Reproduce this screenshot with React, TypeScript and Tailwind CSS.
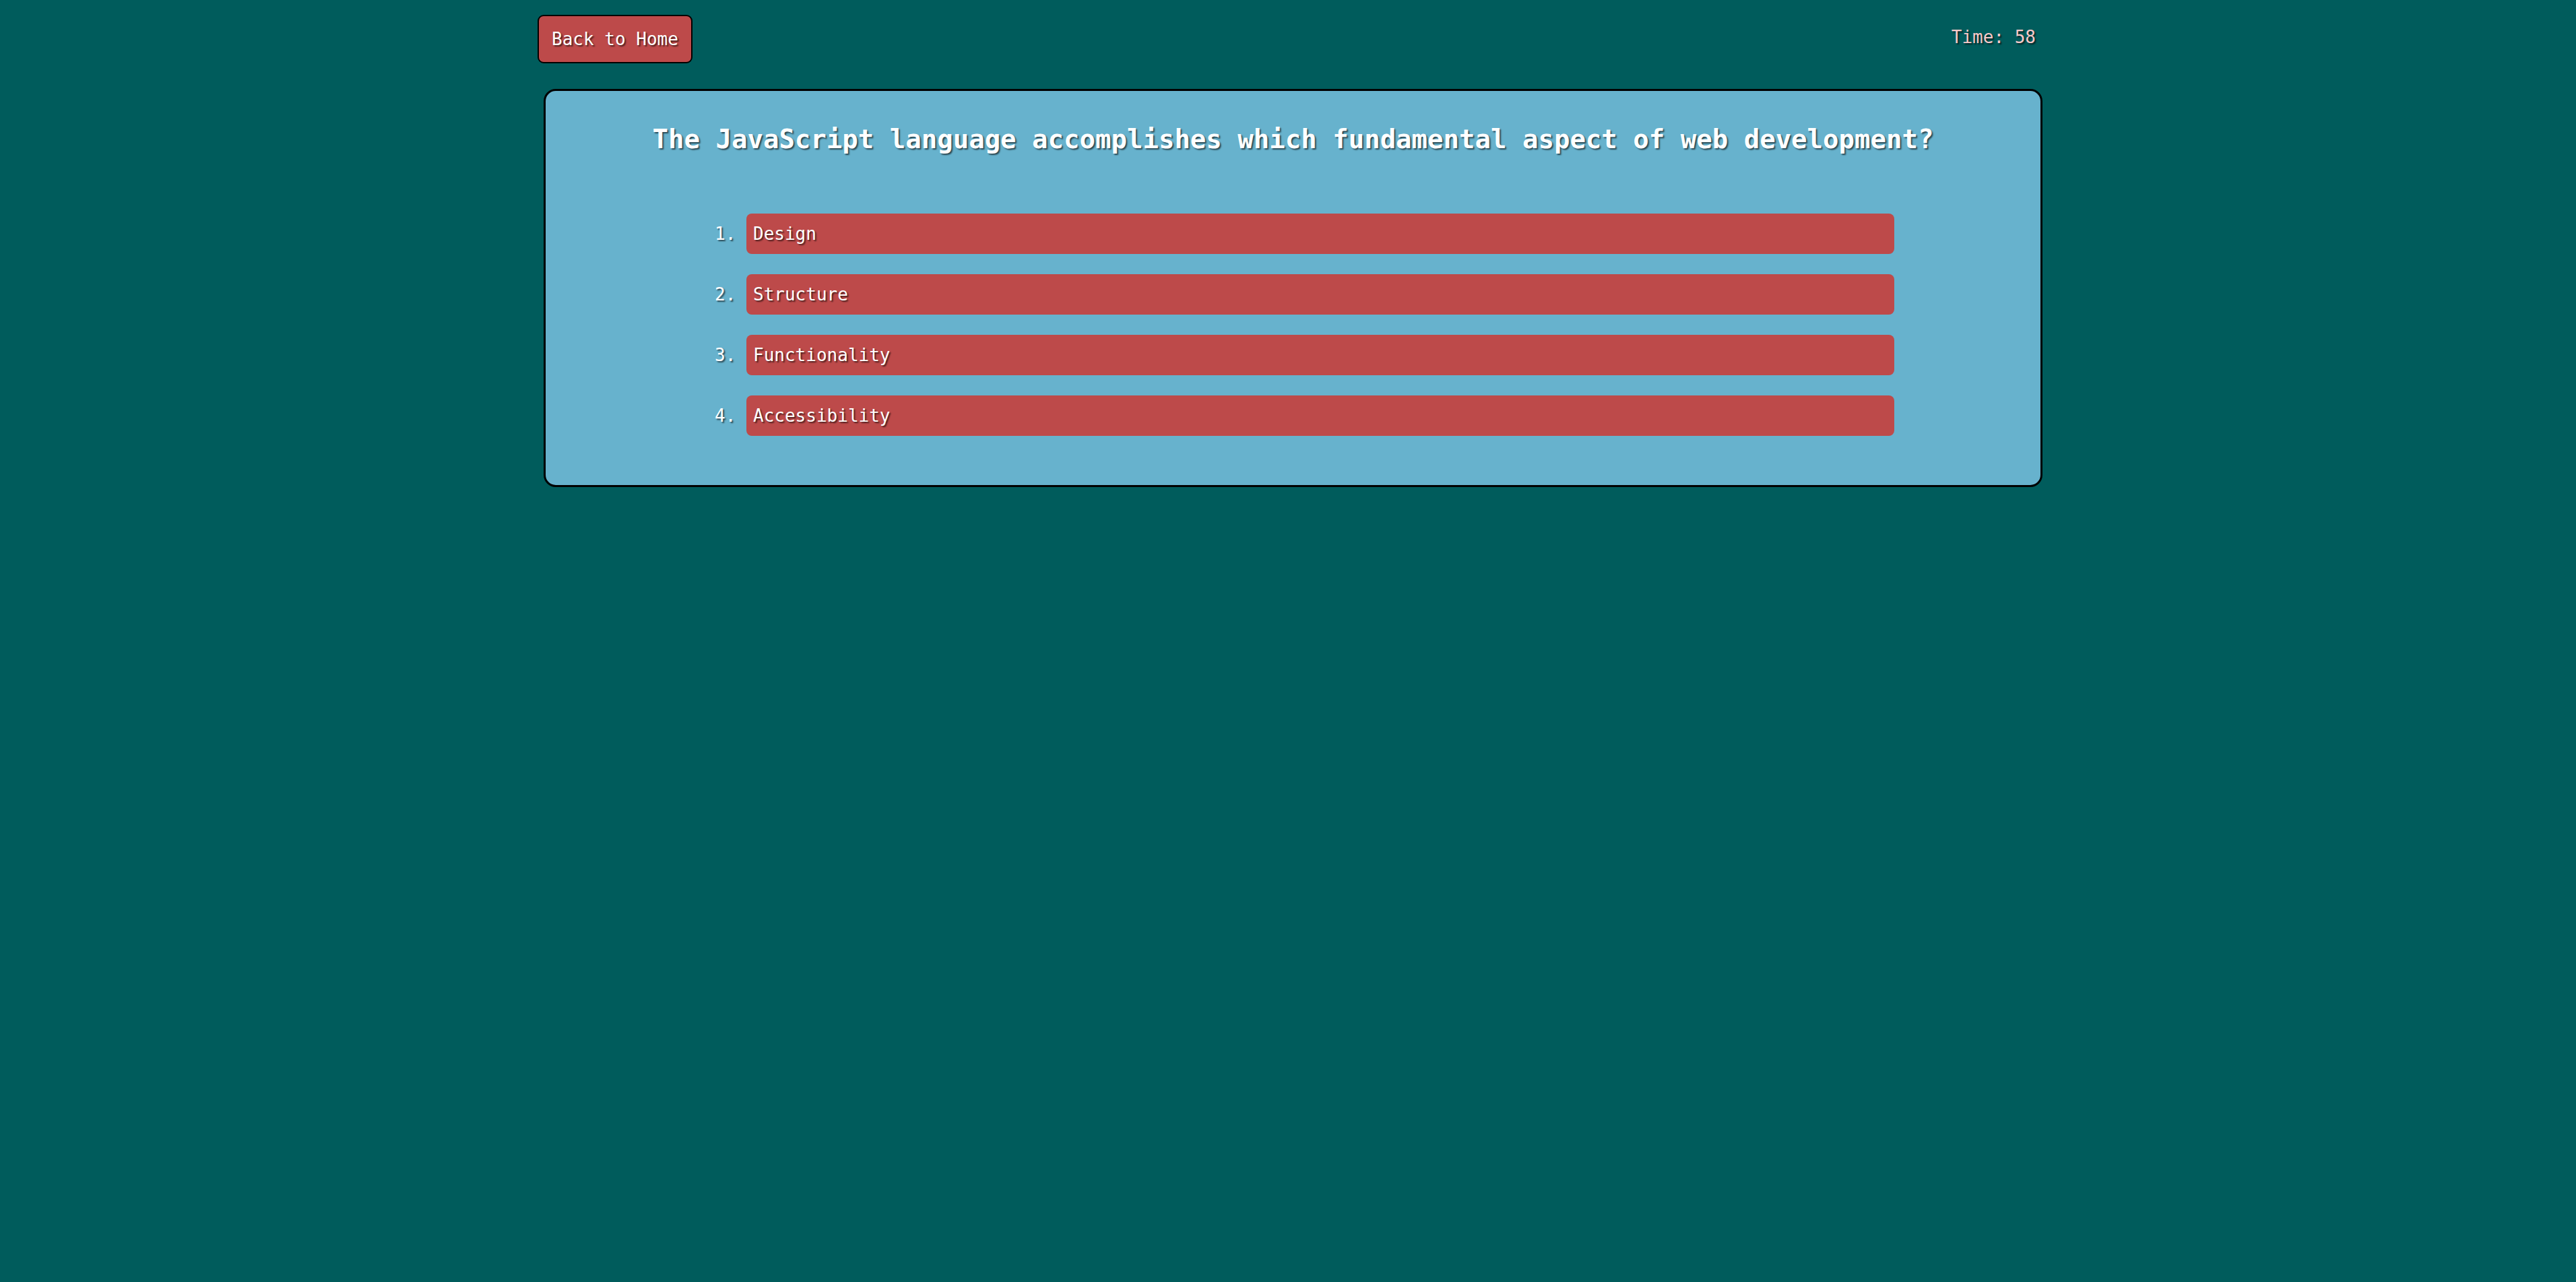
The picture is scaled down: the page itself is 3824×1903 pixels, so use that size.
const shadow = "[text-shadow:2px_2px_2px_rgba(0,0,0,0.6)]";

const options = ["Design", "Structure", "Functionality", "Accessibility"];

const App = () => {
  return (
    <div className="min-h-screen w-full bg-[#005c5c] font-['DejaVu_Sans_Mono',monospace] text-white">
      <div className="ml-[798px] w-[2234px] pt-[22px]">
        {/* Top bar */}
        <div className="flex items-start justify-between">
          <button
            className={`rounded-[9px] border-2 border-black bg-[#bd4a4a] px-[19px] py-[19px] text-[26px] leading-[30px] text-white ${shadow}`}
          >
            Back to Home
          </button>
          <div className={`mt-[18px] pr-[10px] text-[26px] leading-[30px] text-[#f8c9c9] ${shadow}`}>
            Time: 58
          </div>
        </div>

        {/* Question card */}
        <div className="mt-[38px] ml-[9px] rounded-[18px] border-[3px] border-black bg-[#67b2cd] pt-[49px] pb-[73px]">
          <h2 className={`text-center text-[39px] font-bold leading-[45px] text-white ${shadow}`}>
            The JavaScript language accomplishes which fundamental aspect of web development?
          </h2>
          <ol className={`mt-[88px] ml-[298px] mr-[217px] list-decimal flex flex-col gap-[30px] text-[26px] leading-[30px] ${shadow}`}>
            {options.map((opt) => (
              <li key={opt} className="rounded-[8px] bg-[#bd4a4a] px-[10px] py-[15px] text-white">
                {opt}
              </li>
            ))}
          </ol>
        </div>
      </div>
    </div>
  );
};

export default App;
